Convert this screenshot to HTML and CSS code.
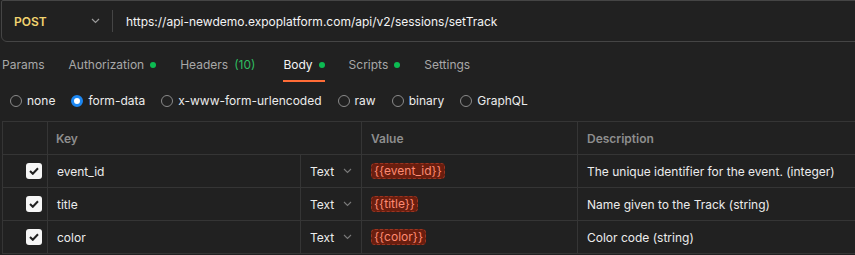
FILE: index.html
```html
<!DOCTYPE html>
<html lang="en">
<head>
    <meta charset="UTF-8">
    <meta name="viewport" content="width=device-width, initial-scale=1.0">
    <title>setTrack - request</title>
    <link rel="stylesheet" href="styles.css">
</head>
<body>
    <div class="url-bar">
        <div class="method">
            <span class="method-name">POST</span>
            <svg class="chevron" width="9" height="6" viewBox="0 0 9 6"><path d="M1 1l3.5 3.5L8 1" fill="none" stroke="#9a9a9a" stroke-width="1.2"/></svg>
        </div>
        <div class="url">https://api-newdemo.expoplatform.com/api/v2/sessions/setTrack</div>
    </div>

    <div class="tabs">
        <span class="tab">Params</span>
        <span class="tab">Authorization <i class="dot"></i></span>
        <span class="tab">Headers <span class="count">(10)</span></span>
        <span class="tab active">Body <i class="dot"></i></span>
        <span class="tab">Scripts <i class="dot"></i></span>
        <span class="tab">Settings</span>
    </div>

    <div class="body-types">
        <label class="radio"><span class="circle"></span>none</label>
        <label class="radio checked"><span class="circle"></span>form-data</label>
        <label class="radio"><span class="circle"></span>x-www-form-urlencoded</label>
        <label class="radio"><span class="circle"></span>raw</label>
        <label class="radio"><span class="circle"></span>binary</label>
        <label class="radio"><span class="circle"></span>GraphQL</label>
    </div>

    <div class="params">
        <div class="row head">
            <div class="cell check"></div>
            <div class="cell key">Key</div>
            <div class="cell value">Value</div>
            <div class="cell desc">Description</div>
        </div>
        <div class="row">
            <div class="cell check"><span class="box"><svg width="10" height="8" viewBox="0 0 10 8"><path d="M1 4l2.8 2.8L9 1.2" fill="none" stroke="#212121" stroke-width="2"/></svg></span></div>
            <div class="cell name">event_id</div>
            <div class="cell type">Text <svg width="9" height="6" viewBox="0 0 9 6"><path d="M1 1l3.5 3.5L8 1" fill="none" stroke="#7a7a7a" stroke-width="1.1"/></svg></div>
            <div class="cell value"><span class="var">{{event_id}}</span></div>
            <div class="cell desc">The unique identifier for the event. (integer)</div>
        </div>
        <div class="row">
            <div class="cell check"><span class="box"><svg width="10" height="8" viewBox="0 0 10 8"><path d="M1 4l2.8 2.8L9 1.2" fill="none" stroke="#212121" stroke-width="2"/></svg></span></div>
            <div class="cell name">title</div>
            <div class="cell type">Text <svg width="9" height="6" viewBox="0 0 9 6"><path d="M1 1l3.5 3.5L8 1" fill="none" stroke="#7a7a7a" stroke-width="1.1"/></svg></div>
            <div class="cell value"><span class="var">{{title}}</span></div>
            <div class="cell desc">Name given to the Track (string)</div>
        </div>
        <div class="row">
            <div class="cell check"><span class="box"><svg width="10" height="8" viewBox="0 0 10 8"><path d="M1 4l2.8 2.8L9 1.2" fill="none" stroke="#212121" stroke-width="2"/></svg></span></div>
            <div class="cell name">color</div>
            <div class="cell type">Text <svg width="9" height="6" viewBox="0 0 9 6"><path d="M1 1l3.5 3.5L8 1" fill="none" stroke="#7a7a7a" stroke-width="1.1"/></svg></div>
            <div class="cell value"><span class="var">{{color}}</span></div>
            <div class="cell desc">Color code (string)</div>
        </div>
    </div>
</body>
</html>
```

FILE: styles.css
```css
body {
    font-family: Inter, 'Noto Sans', sans-serif;
    font-size: 12px;
    margin: 0;
    background-color: #212121;
    color: #ececec;
    overflow: hidden;
}
.url-bar {
    display: flex;
    align-items: center;
    height: 40px;
    width: 880px;
    margin-left: 1px;
    border: 1px solid #454545;
    border-radius: 2px 0 0 6px;
}
.method {
    display: flex;
    align-items: center;
    justify-content: space-between;
    width: 86px;
    height: 22px;
    padding: 0 12px;
    border-right: 1px solid #454545;
}
.method-name {
    color: #f2d36f;
    font-weight: 600;
}
.url {
    padding-left: 13px;
    color: #f4f4f4;
}
.tabs {
    display: flex;
    gap: 24px;
    padding: 14px 0 0 2px;
    height: 26px;
}
.tab {
    display: flex;
    align-items: flex-start;
    gap: 6px;
    color: #a8a8a8;
    line-height: 18px;
}
.tab.active {
    color: #f4f4f4;
    border-bottom: 2px solid #ff6c37;
    height: 24px;
}
.dot {
    width: 6px;
    height: 6px;
    margin-top: 6px;
    border-radius: 50%;
    background: #0cbb52;
}
.count {
    color: #2fbd60;
    margin-right: 4px;
}
.body-types {
    display: flex;
    gap: 16px;
    padding: 11px 0 0 10px;
    height: 28px;
}
.radio {
    display: flex;
    align-items: flex-start;
    gap: 5px;
    line-height: 16px;
    color: #ececec;
}
.circle {
    width: 10px;
    height: 10px;
    margin-top: 2px;
    border: 1px solid #8a8a8a;
    border-radius: 50%;
}
.radio.checked .circle {
    width: 6px;
    height: 6px;
    border: 3px solid #1c87f2;
    background: #ffffff;
}
.params {
    margin-left: 2px;
    width: 900px;
    border-top: 1px solid #353535;
    border-left: 1px solid #353535;
}
.row {
    display: flex;
    height: 33px;
}
.cell {
    display: flex;
    align-items: center;
    box-sizing: border-box;
    border-right: 1px solid #353535;
    border-bottom: 1px solid #353535;
}
.check {
    width: 45px;
    justify-content: flex-end;
    padding-right: 5px;
}
.head .key {
    width: 314px;
    padding-left: 8px;
}
.head .cell {
    color: #8e8e8e;
    font-weight: 600;
}
.name {
    width: 253px;
    padding-left: 9px;
}
.type {
    width: 61px;
    padding-left: 9px;
    gap: 9px;
}
.value {
    width: 216px;
    padding-left: 9px;
}
.desc {
    flex: 1;
    padding-left: 9px;
}
.box {
    display: flex;
    align-items: center;
    justify-content: center;
    width: 16px;
    height: 16px;
    border-radius: 3px;
    background: #f6f6f6;
}
.var {
    padding: 0 2px;
    line-height: 14px;
    color: #ff8b72;
    background: #6a1e0f;
    border: 1px dashed #9b3420;
    border-radius: 4px;
}
```
